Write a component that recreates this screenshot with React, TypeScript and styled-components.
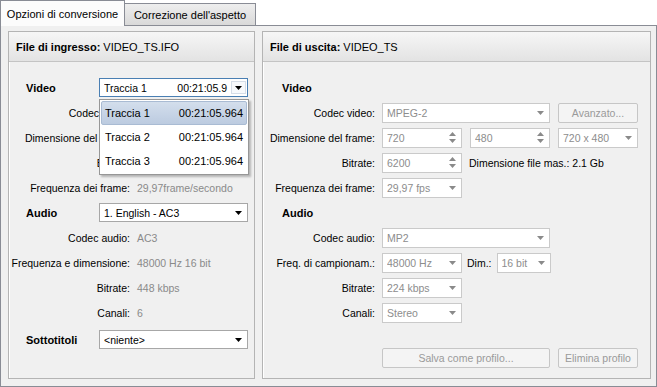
import styled, { createGlobalStyle } from 'styled-components';

const GlobalStyle = createGlobalStyle`
  html, body { margin: 0; padding: 0; background: #fff; }
  body {
    font-family: "Liberation Sans", Arial, sans-serif;
    font-size: 10.5px;
    color: #000;
  }
`;

const Window = styled.div`
  width: 657px;
  height: 387px;
  display: flex;
  flex-direction: column;
  overflow: hidden;
  background: #fff;
`;

const TabStrip = styled.div`
  display: flex;
  align-items: flex-end;
  height: 25px;
  position: relative;
  z-index: 1;
`;

const Tab = styled.div<{ $active?: boolean; $w: number }>`
  box-sizing: border-box;
  width: ${p => p.$w}px;
  height: ${p => (p.$active ? 26 : 22)}px;
  margin-bottom: ${p => (p.$active ? -1 : 0)}px;
  border: 1px solid #898c95;
  border-bottom: none;
  border-left: ${p => (p.$active ? '1px solid #898c95' : 'none')};
  background: ${p => (p.$active ? '#fcfcfc' : 'linear-gradient(#eeeeee, #d9d9d9)')};
  font-size: 11px;
  display: flex;
  align-items: center;
  justify-content: center;
  padding-top: ${p => (p.$active ? 0 : 1)}px;
`;

const Pane = styled.div`
  flex: 1;
  box-sizing: border-box;
  border: 1px solid #898c95;
  background: #f0f0f0;
  padding: 5px 5px 7px 7px;
  display: flex;
  gap: 7px;
`;

const Panel = styled.section<{ $w: number }>`
  box-sizing: border-box;
  width: ${p => p.$w}px;
  height: 348px;
  border: 1px solid #b4b4b4;
  box-shadow: inset 1px 1px 0 #fff;
  display: flex;
  flex-direction: column;
`;

const PanelHeader = styled.header`
  height: 30px;
  box-sizing: border-box;
  padding: 0 7px;
  display: flex;
  align-items: center;
  background: linear-gradient(#f6f6f6, #e3e3e3);
  border-bottom: 1px solid #c4c4c4;
  font-size: 11px;
  b { font-weight: bold; margin-right: 3px; }
`;

const PanelBody = styled.div`
  padding-top: 13px;
  display: flex;
  flex-direction: column;
`;

/* ---------- left panel ---------- */

const SectionRow = styled.div<{ $extra?: number }>`
  height: 25px;
  margin-top: ${p => p.$extra ?? 0}px;
  display: flex;
  align-items: center;
  padding-left: 17px;
`;

const SectionLabel = styled.span`
  width: 73px;
  font-weight: bold;
  font-size: 11px;
`;

const InfoRow = styled.div`
  height: 25px;
  display: grid;
  grid-template-columns: 121px 1fr;
  column-gap: 7px;
  align-items: center;
`;

const InfoLabel = styled.span`
  text-align: right;
  white-space: nowrap;
`;

const InfoValue = styled.span`
  color: #8a8a8a;
  white-space: nowrap;
`;

const ComboWrap = styled.div`
  position: relative;
`;

const Combo = styled.div<{ $w: number; $h?: number; $disabled?: boolean; $focused?: boolean }>`
  box-sizing: border-box;
  width: ${p => p.$w}px;
  height: ${p => p.$h ?? 20}px;
  border: 1px solid ${p => (p.$focused ? '#4a7fb3' : p.$disabled ? '#cacaca' : '#a7a7a7')};
  background: #fff;
  color: ${p => (p.$disabled ? '#8d8d8d' : '#000')};
  display: flex;
  align-items: center;
  padding-left: 4px;
  white-space: nowrap;
  overflow: hidden;
`;

const ComboText = styled.span`
  flex: 1;
  display: flex;
  justify-content: space-between;
  padding-right: 4px;
  overflow: hidden;
`;

const DropButton = styled.span<{ $boxed?: boolean }>`
  width: 15px;
  height: 13px;
  margin-right: 1px;
  box-sizing: border-box;
  display: flex;
  align-items: center;
  justify-content: center;
  border: 1px solid ${p => (p.$boxed ? '#d5dde8' : 'transparent')};
  background: ${p => (p.$boxed ? '#f7f9fc' : 'transparent')};
`;

const Popup = styled.ul`
  position: absolute;
  top: calc(100% + 2px);
  left: 0;
  width: 150px;
  box-sizing: border-box;
  margin: 0;
  padding: 1px;
  list-style: none;
  background: #fff;
  border: 1px solid #979797;
  box-shadow: 2px 2px 2px rgba(0, 0, 0, 0.25);
  z-index: 5;
`;

const PopupItem = styled.li<{ $selected?: boolean }>`
  height: 24px;
  box-sizing: border-box;
  display: flex;
  align-items: center;
  justify-content: space-between;
  padding: 0 3px;
  font-size: 11px;
  border: 1px solid ${p => (p.$selected ? '#a9bbd3' : 'transparent')};
  border-radius: 2px;
  background: ${p => (p.$selected ? 'linear-gradient(#d3deec, #bccbe0)' : 'transparent')};
`;

/* ---------- right panel ---------- */

const Heading = styled.div`
  height: 25px;
  display: flex;
  align-items: center;
  padding-left: 19px;
  font-weight: bold;
  font-size: 11px;
`;

const FormRow = styled.div<{ $gapTop?: number }>`
  height: 25px;
  margin-top: ${p => p.$gapTop ?? 0}px;
  display: grid;
  grid-template-columns: 112px 1fr;
  column-gap: 7px;
  align-items: center;
`;

const FormLabel = styled.span`
  text-align: right;
  white-space: nowrap;
`;

const Controls = styled.div<{ $gap?: number }>`
  display: flex;
  align-items: center;
  gap: ${p => p.$gap ?? 8}px;
`;

const Note = styled.span`
  white-space: nowrap;
`;

const SpinArrows = styled.span`
  width: 18px;
  display: flex;
  flex-direction: column;
  align-items: center;
  gap: 3px;
`;

const Button = styled.div<{ $w: number }>`
  box-sizing: border-box;
  width: ${p => p.$w}px;
  height: 20px;
  border: 1px solid #c6c6c6;
  border-radius: 2px;
  background: #f4f4f4;
  color: #9a9a9a;
  display: flex;
  align-items: center;
  justify-content: center;
  white-space: nowrap;
`;

const Arrow = ({ color = '#000', up = false }: { color?: string; up?: boolean }) => (
  <svg width="7" height="4" viewBox="0 0 7 4">
    <path d={up ? 'M0 4h7L3.5 0z' : 'M0 0h7L3.5 4z'} fill={color} />
  </svg>
);

const SelectBox = ({ w, value }: { w: number; value: string }) => (
  <Combo $w={w} $disabled>
    <ComboText>{value}</ComboText>
    <DropButton>
      <Arrow color="#8a8a8a" />
    </DropButton>
  </Combo>
);

const SpinBox = ({ value }: { value: string }) => (
  <Combo $w={80} $disabled>
    <ComboText>{value}</ComboText>
    <SpinArrows>
      <Arrow color="#8a8a8a" up />
      <Arrow color="#8a8a8a" />
    </SpinArrows>
  </Combo>
);

const tracks = ['Traccia 1', 'Traccia 2', 'Traccia 3'];

export default function App() {
  return (
    <Window>
      <GlobalStyle />
      <TabStrip>
        <Tab $active $w={125}>Opzioni di conversione</Tab>
        <Tab $w={131}>Correzione dell'aspetto</Tab>
      </TabStrip>
      <Pane>
        <Panel $w={247}>
          <PanelHeader>
            <b>File di ingresso:</b> VIDEO_TS.IFO
          </PanelHeader>
          <PanelBody>
            <SectionRow>
              <SectionLabel>Video</SectionLabel>
              <ComboWrap>
                <Combo $w={149} $h={19} $focused>
                  <ComboText>
                    <span>Traccia 1</span>
                    <span>00:21:05.9</span>
                  </ComboText>
                  <DropButton $boxed>
                    <Arrow />
                  </DropButton>
                </Combo>
                <Popup>
                  {tracks.map((t, i) => (
                    <PopupItem key={t} $selected={i === 0}>
                      <span>{t}</span>
                      <span>00:21:05.964</span>
                    </PopupItem>
                  ))}
                </Popup>
              </ComboWrap>
            </SectionRow>
            {/* these rows sit under the open list, only their labels peek out */}
            <InfoRow>
              <InfoLabel>Codec video:</InfoLabel>
            </InfoRow>
            <InfoRow>
              <InfoLabel>Dimensione del frame:</InfoLabel>
            </InfoRow>
            <InfoRow>
              <InfoLabel>Bitrate:</InfoLabel>
            </InfoRow>
            <InfoRow>
              <InfoLabel>Frequenza dei frame:</InfoLabel>
              <InfoValue>29,97frame/secondo</InfoValue>
            </InfoRow>
            <SectionRow>
              <SectionLabel>Audio</SectionLabel>
              <Combo $w={149} $h={19}>
                <ComboText>1. English - AC3</ComboText>
                <DropButton>
                  <Arrow />
                </DropButton>
              </Combo>
            </SectionRow>
            <InfoRow>
              <InfoLabel>Codec audio:</InfoLabel>
              <InfoValue>AC3</InfoValue>
            </InfoRow>
            <InfoRow>
              <InfoLabel>Frequenza e dimensione:</InfoLabel>
              <InfoValue>48000 Hz 16 bit</InfoValue>
            </InfoRow>
            <InfoRow>
              <InfoLabel>Bitrate:</InfoLabel>
              <InfoValue>448 kbps</InfoValue>
            </InfoRow>
            <InfoRow>
              <InfoLabel>Canali:</InfoLabel>
              <InfoValue>6</InfoValue>
            </InfoRow>
            <SectionRow $extra={2}>
              <SectionLabel>Sottotitoli</SectionLabel>
              <Combo $w={149} $h={19}>
                <ComboText>&lt;niente&gt;</ComboText>
                <DropButton>
                  <Arrow />
                </DropButton>
              </Combo>
            </SectionRow>
          </PanelBody>
        </Panel>

        <Panel $w={389}>
          <PanelHeader>
            <b>File di uscita:</b> VIDEO_TS
          </PanelHeader>
          <PanelBody>
            <Heading>Video</Heading>
            <FormRow>
              <FormLabel>Codec video:</FormLabel>
              <Controls>
                <SelectBox w={168} value="MPEG-2" />
                <Button $w={80}>Avanzato...</Button>
              </Controls>
            </FormRow>
            <FormRow>
              <FormLabel>Dimensione del frame:</FormLabel>
              <Controls>
                <SpinBox value="720" />
                <SpinBox value="480" />
                <SelectBox w={80} value="720 x 480" />
              </Controls>
            </FormRow>
            <FormRow>
              <FormLabel>Bitrate:</FormLabel>
              <Controls $gap={7}>
                <SpinBox value="6200" />
                <Note>Dimensione file mas.: 2.1 Gb</Note>
              </Controls>
            </FormRow>
            <FormRow>
              <FormLabel>Frequenza dei frame:</FormLabel>
              <Controls>
                <SelectBox w={80} value="29,97 fps" />
              </Controls>
            </FormRow>
            <Heading>Audio</Heading>
            <FormRow>
              <FormLabel>Codec audio:</FormLabel>
              <Controls>
                <SelectBox w={168} value="MP2" />
              </Controls>
            </FormRow>
            <FormRow>
              <FormLabel>Freq. di campionam.:</FormLabel>
              <Controls $gap={5}>
                <SelectBox w={80} value="48000 Hz" />
                <span>Dim.:</span>
                <SelectBox w={54} value="16 bit" />
              </Controls>
            </FormRow>
            <FormRow>
              <FormLabel>Bitrate:</FormLabel>
              <Controls>
                <SelectBox w={80} value="224 kbps" />
              </Controls>
            </FormRow>
            <FormRow>
              <FormLabel>Canali:</FormLabel>
              <Controls>
                <SelectBox w={80} value="Stereo" />
              </Controls>
            </FormRow>
            <FormRow $gapTop={20}>
              <span />
              <Controls>
                <Button $w={168}>Salva come profilo...</Button>
                <Button $w={80}>Elimina profilo</Button>
              </Controls>
            </FormRow>
          </PanelBody>
        </Panel>
      </Pane>
    </Window>
  );
}
